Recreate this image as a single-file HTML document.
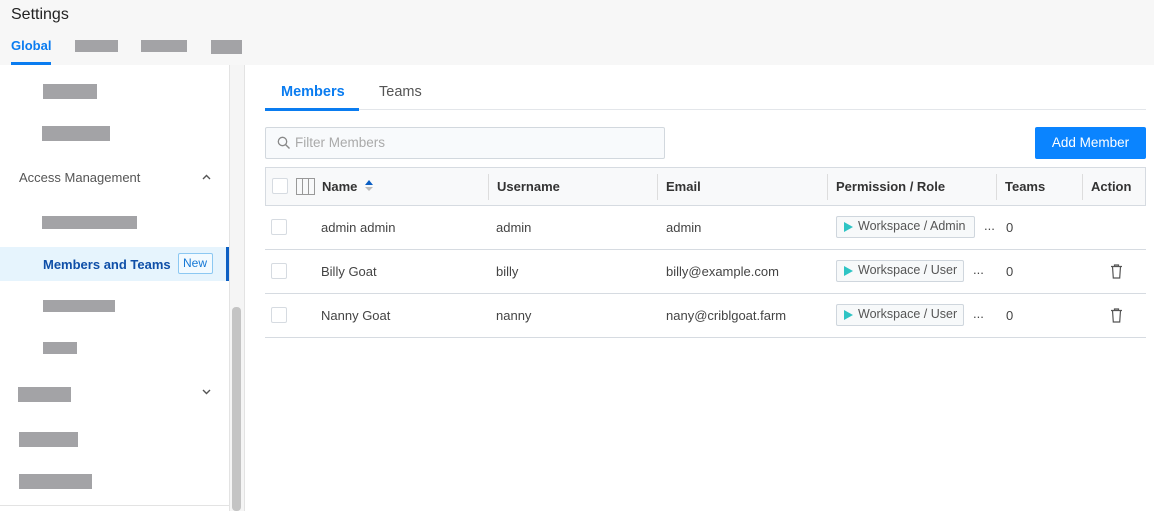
<!DOCTYPE html>
<html><head><style>
*{box-sizing:border-box;margin:0;padding:0}
body{width:1154px;height:511px;overflow:hidden;background:#fff;font-family:"Liberation Sans",sans-serif;color:#333;position:relative;font-size:13px}
.a{position:absolute}
.g{position:absolute;background:#a3a3a6}
.hdr{left:0;top:0;width:1154px;height:65px;background:#f7f7f7}
.th{position:absolute;top:179px;font-weight:bold;font-size:13px;color:#333}
.sep{position:absolute;top:174px;width:1px;height:26px;background:#ddd}
.row{position:absolute;left:265px;width:881px;height:1px;background:#d6dbe1}
.cb{position:absolute;width:16px;height:16px;border:1px solid #d6dbe1;border-radius:2px;background:#fff}
.td{position:absolute;font-size:13px;color:#444}
.tag{position:absolute;left:836px;height:22px;border:1px solid #cfd6dd;border-radius:2px;background:#f7f9fa;font-size:12.5px;color:#555;padding:2px 0 0 21px;white-space:nowrap;overflow:hidden}
.tag:before{content:"";position:absolute;left:7px;top:5px;border-left:9px solid #2ec4c4;border-top:5.5px solid transparent;border-bottom:5.5px solid transparent}
</style></head><body>
<div class="a hdr"></div>
<div class="a" style="left:11px;top:6px;font-size:16px;color:#222">Settings</div>
<div class="a" style="left:11px;top:38px;font-size:13px;color:#0a7cf0;font-weight:bold">Global</div>
<div class="a" style="left:11px;top:62px;width:40px;height:3px;background:#0a7cf0"></div>
<div class="g" style="left:75px;top:40px;width:43px;height:12px"></div>
<div class="g" style="left:141px;top:40px;width:46px;height:12px"></div>
<div class="g" style="left:211px;top:40px;width:31px;height:14px"></div>
<div class="a" style="left:229px;top:65px;width:16px;height:446px;background:#f5f5f5;border-left:1px solid #e3e3e3;border-right:1px solid #e3e3e3"></div>
<div class="a" style="left:232px;top:307px;width:9px;height:204px;background:#c4c4c4;border-radius:4px"></div>
<div class="g" style="left:43px;top:84px;width:54px;height:15px"></div>
<div class="g" style="left:42px;top:126px;width:68px;height:15px"></div>
<div class="a" style="left:19px;top:170px;font-size:13px;color:#555">Access Management</div>
<svg class="a" style="left:202px;top:174px" width="9" height="6" viewBox="0 0 9 6"><path d="M1 5L4.5 1.5L8 5" fill="none" stroke="#555" stroke-width="1.4"/></svg>
<div class="g" style="left:42px;top:216px;width:95px;height:13px"></div>
<div class="a" style="left:0;top:247px;width:229px;height:34px;background:#e6f4fd"></div>
<div class="a" style="left:226px;top:247px;width:3px;height:34px;background:#0b5fc4"></div>
<div class="a" style="left:43px;top:257px;font-size:13px;color:#0f4fa8;font-weight:bold">Members and Teams</div>
<div class="a" style="left:178px;top:253px;width:35px;height:21px;border:1px solid #8cc8f2;border-radius:2px;color:#1578d6;font-size:12px;padding:2px 0 0 4px;background:#f2faff">New</div>
<div class="g" style="left:43px;top:300px;width:72px;height:12px"></div>
<div class="g" style="left:43px;top:342px;width:34px;height:12px"></div>
<div class="g" style="left:18px;top:387px;width:53px;height:15px"></div>
<svg class="a" style="left:202px;top:389px" width="9" height="6" viewBox="0 0 9 6"><path d="M1 1L4.5 4.5L8 1" fill="none" stroke="#555" stroke-width="1.4"/></svg>
<div class="g" style="left:19px;top:432px;width:59px;height:15px"></div>
<div class="g" style="left:19px;top:474px;width:73px;height:15px"></div>
<div class="a" style="left:0;top:505px;width:229px;height:1px;background:#e3e3e3"></div>
<div class="a" style="left:281px;top:84px;font-size:14.5px;color:#0a7cf0;font-weight:bold">Members</div>
<div class="a" style="left:379px;top:84px;font-size:14.5px;color:#555">Teams</div>
<div class="a" style="left:265px;top:109px;width:881px;height:1px;background:#e3e6ea"></div>
<div class="a" style="left:265px;top:108px;width:94px;height:3px;background:#0a7cf0"></div>
<div class="a" style="left:265px;top:127px;width:400px;height:32px;border:1px solid #d2d8de;border-radius:2px;background:#f8fafc"></div>
<svg class="a" style="left:277px;top:136px" width="14" height="14" viewBox="0 0 14 14"><circle cx="5.5" cy="5.5" r="4.2" fill="none" stroke="#888" stroke-width="1.3"/><path d="M8.6 8.6L12.5 12.5" stroke="#888" stroke-width="1.4"/></svg>
<div class="a" style="left:295px;top:135px;font-size:13.5px;color:#aaa">Filter Members</div>
<div class="a" style="left:1035px;top:127px;width:111px;height:32px;background:#0a84ff;border-radius:2px;color:#fff;font-size:13.5px;text-align:center;line-height:32px">Add Member</div>
<div class="a" style="left:265px;top:167px;width:881px;height:39px;background:#f8f9fa;border:1px solid #d6dbe1"></div>
<div class="cb" style="left:272px;top:178px"></div>
<svg class="a" style="left:296px;top:178px" width="19" height="17" viewBox="0 0 19 17"><rect x="0.5" y="0.5" width="18" height="16" fill="none" stroke="#999"/><path d="M6.5 1V16M12.5 1V16" stroke="#999"/></svg>
<div class="th" style="left:322px">Name</div>
<div class="a" style="left:365px;top:180px;width:0;height:0;border-left:4px solid transparent;border-right:4px solid transparent;border-bottom:5px solid #0b5fc4"></div>
<div class="a" style="left:365px;top:187px;width:0;height:0;border-left:4px solid transparent;border-right:4px solid transparent;border-top:4px solid #bbb"></div>
<div class="sep" style="left:488px"></div><div class="th" style="left:497px">Username</div>
<div class="sep" style="left:657px"></div><div class="th" style="left:666px">Email</div>
<div class="sep" style="left:827px"></div><div class="th" style="left:836px">Permission / Role</div>
<div class="sep" style="left:996px"></div><div class="th" style="left:1005px">Teams</div>
<div class="sep" style="left:1082px"></div><div class="th" style="left:1091px">Action</div>
<div class="cb" style="left:271px;top:219px"></div>
<div class="td" style="left:321px;top:220px">admin admin</div>
<div class="td" style="left:496px;top:220px">admin</div>
<div class="td" style="left:666px;top:220px">admin</div>
<div class="tag" style="top:216px;width:139px">Workspace / Admin</div>
<div class="td" style="left:984px;top:218px">...</div>
<div class="td" style="left:1006px;top:220px">0</div>
<div class="row" style="top:249px"></div>
<div class="cb" style="left:271px;top:263px"></div>
<div class="td" style="left:321px;top:264px">Billy Goat</div>
<div class="td" style="left:496px;top:264px">billy</div>
<div class="td" style="left:666px;top:264px">billy@example.com</div>
<div class="tag" style="top:260px;width:128px">Workspace / User</div>
<div class="td" style="left:973px;top:262px">...</div>
<div class="td" style="left:1006px;top:264px">0</div>
<svg class="a" style="left:1110px;top:264px" width="13" height="15" viewBox="0 0 13 15"><path d="M1 2.5H12M4.5 2.5V1H8.5V2.5M2.5 2.5L3.3 14H9.7L10.5 2.5" fill="none" stroke="#555" stroke-width="1.2"/></svg>
<div class="row" style="top:293px"></div>
<div class="cb" style="left:271px;top:307px"></div>
<div class="td" style="left:321px;top:308px">Nanny Goat</div>
<div class="td" style="left:496px;top:308px">nanny</div>
<div class="td" style="left:666px;top:308px">nany@criblgoat.farm</div>
<div class="tag" style="top:304px;width:128px">Workspace / User</div>
<div class="td" style="left:973px;top:306px">...</div>
<div class="td" style="left:1006px;top:308px">0</div>
<svg class="a" style="left:1110px;top:308px" width="13" height="15" viewBox="0 0 13 15"><path d="M1 2.5H12M4.5 2.5V1H8.5V2.5M2.5 2.5L3.3 14H9.7L10.5 2.5" fill="none" stroke="#555" stroke-width="1.2"/></svg>
<div class="row" style="top:337px"></div>
</body></html>
